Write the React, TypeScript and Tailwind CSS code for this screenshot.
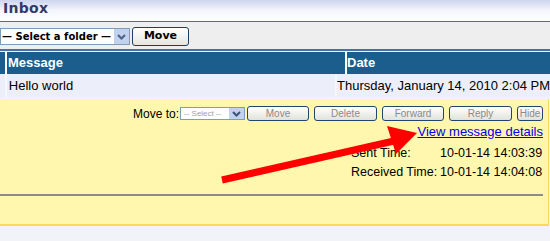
import React from "react";

const Btn = ({ label, w }: { label: string; w: string }) => (
  <button
    className={`${w} h-[15px] rounded-[3px] border border-[#23456b] bg-gradient-to-b from-white to-[#e2e2da] text-[10px] leading-none text-[#8a8a8a] font-['Liberation_Sans',Arial,sans-serif]`}
  >
    {label}
  </button>
);

export default function App() {
  return (
    <div className="relative w-[550px] h-[241px] overflow-hidden bg-[#f2f3f8] font-['Liberation_Sans',Arial,sans-serif] text-[13px] text-black">
      <div className="h-[22px] bg-gradient-to-b from-[#cdd5ee] via-[#f4f6fc] to-white flex items-center pl-[3px] border-b border-[#4a6ea8]">
        <span className="font-['DejaVu_Sans',sans-serif] font-bold text-[14px] text-[#35386a] tracking-[0.3px] -mt-[4px]">Inbox</span>
      </div>
      <div className="h-[29px] bg-[#eeeeee] flex items-center gap-[2px] border-b-2 border-[#4a6ea8] pt-[2px]">
        <div className="w-[130px] h-[17px] bg-white border border-[#7f9db9] flex items-center justify-between">
          <span className="font-['DejaVu_Sans',sans-serif] font-bold text-[10px] pl-[1px] whitespace-nowrap">— Select a folder —</span>
          <span className="w-[15px] h-[15px] bg-[#c1d2ee] flex items-center justify-center">
            <svg width="9" height="6" viewBox="0 0 9 6"><path d="M1 1l3.5 3.5L8 1" stroke="#4d6185" strokeWidth="2" fill="none" /></svg>
          </span>
        </div>
        <button className="w-[57px] h-[19px] rounded-[3px] border border-[#1c3f66] bg-gradient-to-b from-white to-[#e6e6e0] font-['DejaVu_Sans',sans-serif] font-bold text-[11px]">Move</button>
      </div>
      <div className="flex h-[22px] bg-[#1b5e8d] text-white font-bold text-[13px] mt-[1px]">
        <div className="w-[7px] border-r-2 border-white" />
        <div className="w-[340px] border-r-2 border-white flex items-center pl-[1px]">Message</div>
        <div className="flex-1 flex items-center">Date</div>
      </div>
      <div className="flex h-[23px] bg-[#eceefa]">
        <div className="w-[7px] border-r-2 border-[#f6f7fc]" />
        <div className="w-[340px] border-r-2 border-[#f6f7fc] flex items-center pl-[2px]">Hello world</div>
        <div className="flex-1 flex items-center whitespace-nowrap">Thursday, January 14, 2010 2:04 PM</div>
      </div>
      <div className="mt-[2px] h-[127px] w-[549px] bg-[#fff7ad] border-r border-b-2 border-[#f5dc5a] flex flex-col">
        <div className="flex items-center justify-end pr-[5px] mt-[7px] h-[15px]">
          <span className="mr-[1px] text-[12px]">Move to:</span>
          <div className="w-[65px] h-[13px] bg-white border border-[#7f9db9] flex items-center justify-between mr-[2px]">
            <span className="text-[8px] text-[#a0a0a0] pl-[3px] leading-none">-- Select --</span>
            <span className="w-[15px] h-[11px] bg-[#c1d2ee] flex items-center justify-center">
              <svg width="9" height="6" viewBox="0 0 9 6"><path d="M1 1l3.5 3.5L8 1" stroke="#3d5078" strokeWidth="2" fill="none" /></svg>
            </span>
          </div>
          <div className="flex gap-[5px]">
            <Btn label="Move" w="w-[62px]" />
            <Btn label="Delete" w="w-[63px]" />
            <Btn label="Forward" w="w-[62px]" />
            <Btn label="Reply" w="w-[63px]" />
            <Btn label="Hide" w="w-[26px]" />
          </div>
        </div>
        <div className="flex justify-end pr-[5px] mt-[3px]">
          <a href="#" className="text-[#0000ee] underline leading-[16px]">View message details</a>
        </div>
        <div className="flex flex-col items-end pr-[5px] mt-[4px] leading-[19px] whitespace-nowrap text-[12.5px]">
          <div className="flex w-[192px]">
            <span className="w-[89px] shrink-0">Sent Time:</span>
            <span>10-01-14 14:03:39</span>
          </div>
          <div className="flex w-[192px]">
            <span className="w-[89px] shrink-0">Received Time:</span>
            <span>10-01-14 14:04:08</span>
          </div>
        </div>
        <div className="mt-[12px] w-[543px] border-t-2 border-[#8c8c82]" />
      </div>
      <svg className="absolute left-0 top-0 pointer-events-none" width="550" height="241">
        <line x1="222" y1="180" x2="394" y2="141" stroke="#ff0000" strokeWidth="7" />
        <polygon points="417,133 387,126 396,154" fill="#ff0000" />
      </svg>
    </div>
  );
}
